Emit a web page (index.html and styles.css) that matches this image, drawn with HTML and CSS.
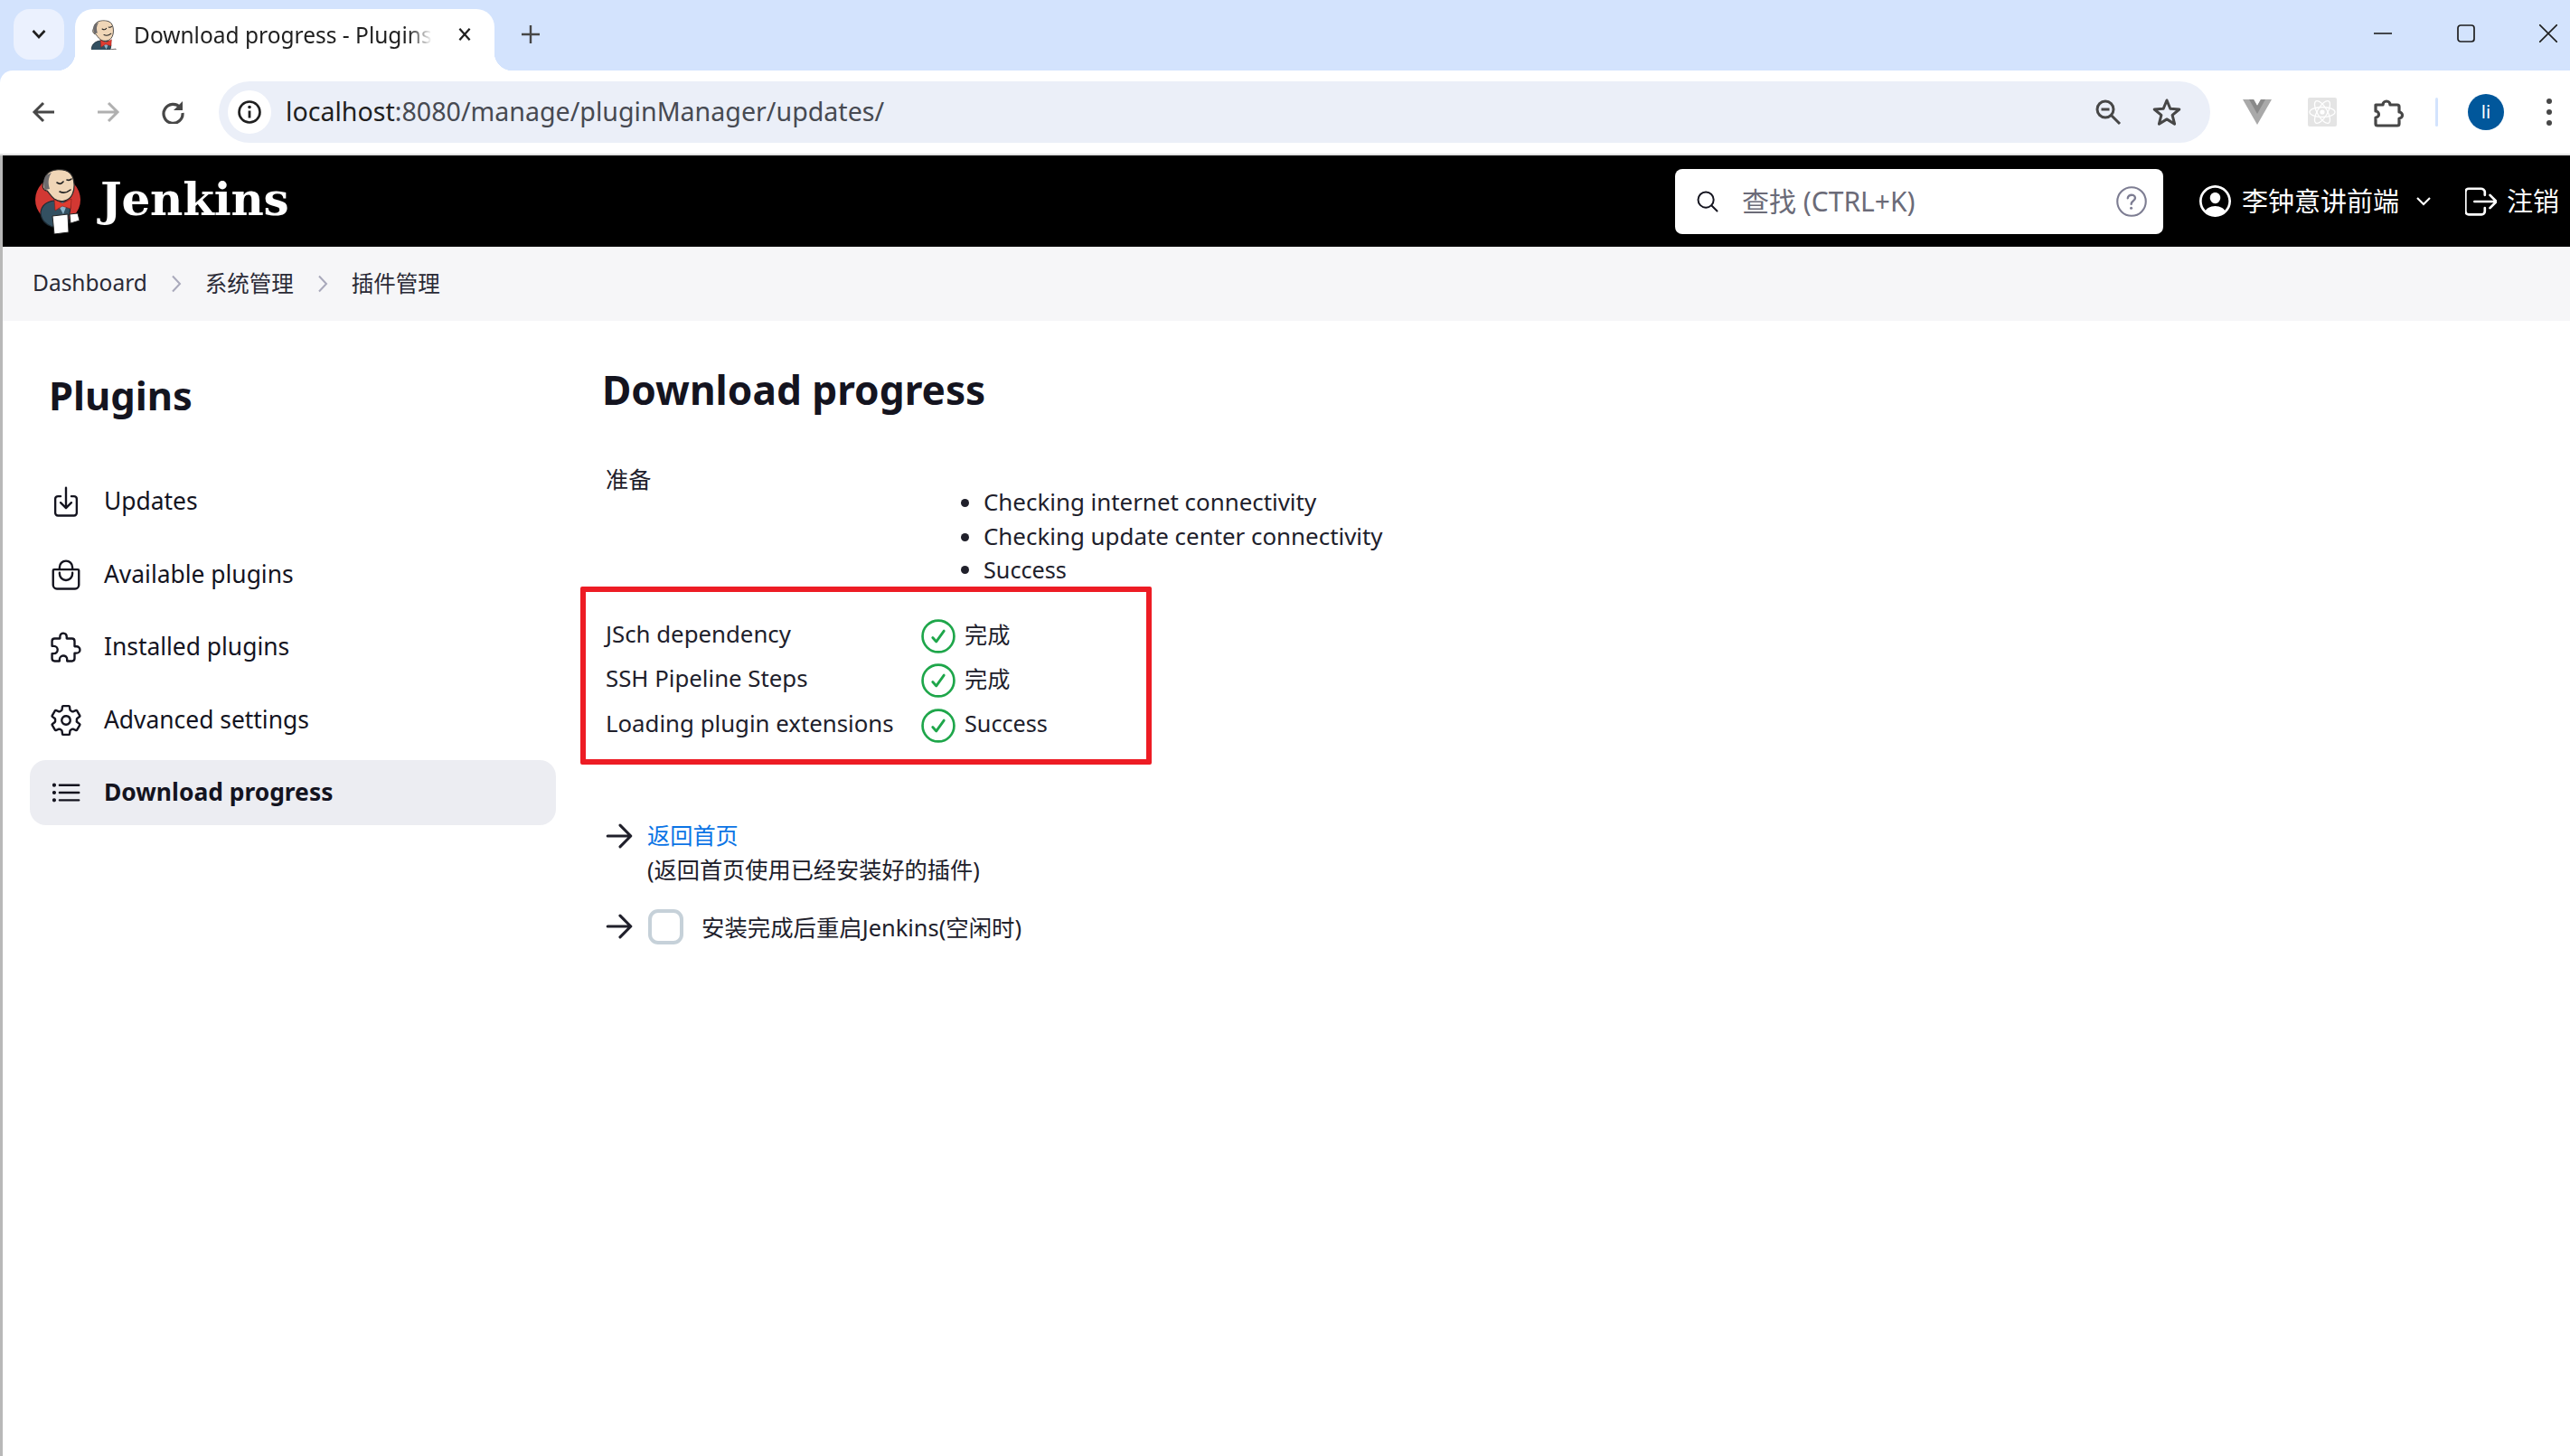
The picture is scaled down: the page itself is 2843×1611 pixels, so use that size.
FILE: index.html
```html
<!DOCTYPE html>
<html lang="zh">
<head>
<meta charset="utf-8">
<title>Download progress - Plugins</title>
<link rel="stylesheet" href="styles.css">
</head>
<body>
<svg class="defs" width="0" height="0" aria-hidden="true">
  <symbol id="butler" viewBox="0 0 52 72">
    <path d="M7 48 C8 40 14 36 22 35 L38 36 C41 40 40 46 38 52 L38 60 L20 64 C13 62 7 56 7 48Z" fill="#335061" stroke="#1d2a33" stroke-width="1.200"/>
    <path d="M25 37 L32 50 L37 37Z" fill="#8db3c9"/>
    <path d="M22 33 L31 38 L41 33 L40 44 L31 41 L23 46Z" fill="#e03c31" stroke="#7d1d18" stroke-width=".6"/>
    <path d="M13 7 C18 -1 34 -1 40 5 C45 11 45 22 42 28 C39 35 29 38 22 33 C18 30 16 26 14 24 C10 24 8 19 10 15 C11 12 11 10 13 7Z" fill="#f0d6b7" stroke="#2a2a2a" stroke-width="1.200"/>
    <path d="M13 7 C10 11 9 18 12 23 L17 22 C15 16 15 10 19 4Z" fill="#6d6b6d"/>
    <path d="M25 15 q4 3 7 -1 M36 12 q3 1 5 -1 M28 25 q6 3 12 -2" fill="none" stroke="#222" stroke-width="1.600" stroke-linecap="round"/>
    <path d="M20 52 L37 50 L38 70 L22 72Z" fill="#fff" stroke="#222" stroke-width="1"/>
    <path d="M39 50 L48 49 L50 57 L40 60Z" fill="#fff" stroke="#222" stroke-width="1"/>
  </symbol>
  <symbol id="mascot" viewBox="0 0 52 72">
    <circle cx="26" cy="34" r="25" fill="#d33833"/>
    <use href="#butler" width="52" height="72"/>
  </symbol>
  <symbol id="favi" viewBox="5 0 46 50">
    <use href="#butler" width="52" height="72"/>
  </symbol>
  <symbol id="check" viewBox="0 0 512 512">
    <circle cx="256" cy="256" r="235" fill="none" stroke="currentColor" stroke-width="36"/>
    <path d="M340 176L226 336 172 276" fill="none" stroke="currentColor" stroke-width="38" stroke-linecap="round" stroke-linejoin="round"/>
  </symbol>
  <symbol id="arrow" viewBox="0 0 512 512">
    <path d="M268 112l144 144-144 144M392 256H100" fill="none" stroke="currentColor" stroke-width="38" stroke-linecap="round" stroke-linejoin="round"/>
  </symbol>
</svg>

<div class="window">
  <div class="tabstrip">
    <div class="tabsearch">
      <svg class="ico-16" viewBox="0 0 16 16"><path d="M1.500 4l6.500 7 6.500-7" fill="none" stroke="#1f1f1f" stroke-width="2.600"/></svg>
    </div>
    <div class="tab">
      <svg class="favicon"><use href="#favi"/></svg>
      <span class="tab-title">Download progress - Plugins</span>
      <svg class="tab-close" viewBox="0 0 16 16"><path d="M3 2.500l10 11M13 2.500l-10 11" fill="none" stroke="#1f1f1f" stroke-width="2"/></svg>
    </div>
    <svg class="newtab" viewBox="0 0 20 20"><path d="M10 0v20M0 10h20" stroke="#474747" stroke-width="2.400"/></svg>
    <div class="winctl">
      <svg class="ctl" viewBox="0 0 20 20"><path d="M0 10h20" stroke="#1f1f1f" stroke-width="1.600"/></svg>
      <svg class="ctl" viewBox="0 0 20 20"><rect x="1" y="1" width="18" height="18" rx="3" fill="none" stroke="#1f1f1f" stroke-width="1.700"/></svg>
      <svg class="ctl" viewBox="0 0 20 20"><path d="M0 0l20 20M20 0L0 20" stroke="#1f1f1f" stroke-width="1.600"/></svg>
    </div>
  </div>

  <div class="toolbar">
    <svg class="nav" viewBox="0 0 26 26"><path d="M25 13H4M13 3L3 13l10 10" fill="none" stroke="#474747" stroke-width="3"/></svg>
    <svg class="nav dim" viewBox="0 0 26 26"><path d="M1 13h21M13 3l10 10-10 10" fill="none" stroke="#b0b0b0" stroke-width="3"/></svg>
    <svg class="nav" viewBox="0 0 26 26"><path d="M21.500 8A10.500 10.500 0 1 0 24 14" fill="none" stroke="#474747" stroke-width="3.200"/><path d="M24 1v10h-10z" fill="#474747"/></svg>
    <div class="omnibox">
      <div class="site-info">
        <svg class="info" viewBox="0 0 28 28"><circle cx="14" cy="14" r="11.500" fill="none" stroke="#1f1f1f" stroke-width="2.600"/><path d="M14 12.500v8" stroke="#1f1f1f" stroke-width="2.800"/><circle cx="14" cy="8.500" r="1.800" fill="#1f1f1f"/></svg>
      </div>
      <span class="url"><span class="url-host">localhost</span>:8080/manage/pluginManager/updates/</span>
      <svg class="omni-ico zoomico" viewBox="0 0 30 30"><circle cx="12" cy="12" r="9" fill="none" stroke="#474747" stroke-width="3"/><path d="M7.500 12h9M18.500 18.500L28 28" stroke="#474747" stroke-width="3"/></svg>
      <svg class="omni-ico" viewBox="0 0 32 32"><path d="M16 3l3.800 9.300 10 .7-7.700 6.400 2.500 9.800L16 23.900l-8.600 5.300 2.500-9.800L2.200 13l10-.7z" fill="none" stroke="#474747" stroke-width="3" stroke-linejoin="round"/></svg>
    </div>
    <div class="ext-row">
      <svg class="ext vue" viewBox="0 0 32 28"><path d="M0 0h12l4 7 4-7h12L16 28z" fill="#a9a9a9"/><path d="M7 0h5l4 7 4-7h5L16 16z" fill="#8a8a8a"/></svg>
      <svg class="ext react" viewBox="0 0 32 32"><rect width="32" height="32" rx="2" fill="#e4e4e4"/><g fill="none" stroke="#fff" stroke-width="1.300"><ellipse cx="16" cy="16" rx="14" ry="5.500"/><ellipse cx="16" cy="16" rx="14" ry="5.500" transform="rotate(60 16 16)"/><ellipse cx="16" cy="16" rx="14" ry="5.500" transform="rotate(120 16 16)"/></g><circle cx="16" cy="16" r="2.600" fill="#fff"/></svg>
      <svg class="ext puzzle" viewBox="0 0 34 34"><path d="M3 9h8a4 4 0 0 1 8 0h8a2 2 0 0 1 2 2v6a3.500 3.500 0 0 1 0 7v6a2 2 0 0 1-2 2H5a2 2 0 0 1-2-2v-7a3.500 3.500 0 0 0 0-7z" fill="none" stroke="#474747" stroke-width="3.200" stroke-linejoin="round"/></svg>
      <span class="sep"></span>
      <span class="avatar">li</span>
      <span class="dots"><i></i><i></i><i></i></span>
    </div>
  </div>

  <div class="page">
    <header class="jk-header">
      <svg class="logo"><use href="#mascot"/></svg>
      <span class="brand">Jenkins</span>
      <div class="search">
        <svg class="search-ico" viewBox="0 0 512 512"><path d="M221.090 64a157.090 157.090 0 10157.090 157.090A157.100 157.100 0 00221.090 64z" fill="none" stroke="#14141f" stroke-width="36"/><path d="M338.290 338.290L448 448" stroke="#14141f" stroke-width="36" stroke-linecap="round"/></svg>
        <span class="search-text">查找 (CTRL+K)</span>
        <svg class="help" viewBox="0 0 512 512"><path d="M256 32a224 224 0 1 0 0 448 224 224 0 0 0 0-448z" fill="none" stroke="#7d7d92" stroke-width="30"/><path d="M196 202s1-22 22-38c13-9 26-12 38-12 11 0 21 2 27 5 10 5 30 17 30 43 0 27-17 39-37 52s-25 27-25 44" fill="none" stroke="#7d7d92" stroke-width="34" stroke-linecap="round"/><circle cx="250" cy="358" r="22" fill="#7d7d92"/></svg>
      </div>
      <svg class="user-ico" viewBox="48 48 416 416"><path fill="#fff" d="M258.900 48C141.920 46.420 46.420 141.920 48 258.900c1.560 112.190 92.930 203.560 205.120 205.120 116.980 1.600 212.480-93.900 210.880-210.880C462.440 140.930 371.070 49.560 258.900 48zm126.420 327.250a4 4 0 01-6.140-.32 124.270 124.270 0 00-32.350-29.590C321.370 329 289.110 320 256 320s-65.370 9-90.830 25.340a124.240 124.240 0 00-32.350 29.580 4 4 0 01-6.140.32A175.320 175.320 0 0180 259c-1.630-97.310 78.220-178.760 175.570-179S432 158.810 432 256a175.320 175.320 0 01-46.680 119.250z"/><path fill="#fff" d="M256 144c-19.720 0-37.550 7.390-50.220 20.820s-19 32-17.570 51.930C191.110 256 221.520 288 256 288s64.830-32 67.790-71.250c1.480-19.740-4.800-38.140-17.680-51.820C293.390 151.440 275.590 144 256 144z"/></svg>
      <span class="user-name">李钟意讲前端</span>
      <svg class="user-chev" viewBox="0 0 18 12"><path d="M2 2l7 7 7-7" fill="none" stroke="#fff" stroke-width="2.200"/></svg>
      <svg class="logout-ico" viewBox="60 90 392 332"><path d="M304 336v40a40 40 0 01-40 40H104a40 40 0 01-40-40V136a40 40 0 0140-40h152c22.090 0 48 17.910 48 40v40M368 336l80-80-80-80M176 256h256" fill="none" stroke="#fff" stroke-width="30" stroke-linecap="round" stroke-linejoin="round"/></svg>
      <span class="logout">注销</span>
    </header>

    <nav class="crumbs">
      <span class="crumb">Dashboard</span>
      <svg class="crumb-sep" viewBox="0 0 12 20"><path d="M2 1.500l8 8.500-8 8.500" fill="none" stroke="#a9a9bb" stroke-width="2"/></svg>
      <span class="crumb">系统管理</span>
      <svg class="crumb-sep" viewBox="0 0 12 20"><path d="M2 1.500l8 8.500-8 8.500" fill="none" stroke="#a9a9bb" stroke-width="2"/></svg>
      <span class="crumb">插件管理</span>
    </nav>

    <div class="body-row">
      <aside class="sidebar">
        <h2 class="side-title">Plugins</h2>
        <ul class="side-list">
          <li class="side-item">
            <svg class="side-ico" viewBox="0 0 512 512"><path d="M336 176h40a40 40 0 0140 40v208a40 40 0 01-40 40H136a40 40 0 01-40-40V216a40 40 0 0140-40h40M176 272l80 80 80-80M256 48v288" /></svg>
            <span class="side-text">Updates</span>
          </li>
          <li class="side-item">
            <svg class="side-ico" viewBox="0 0 512 512"><path d="M80 176a16 16 0 00-16 16v216c0 30.240 25.760 56 56 56h272c30.240 0 56-24.510 56-54.750V192a16 16 0 00-16-16zM160 176v-32a96 96 0 0196-96h0a96 96 0 0196 96v32M160 224v16a96 96 0 0096 96h0a96 96 0 0096-96v-16"/></svg>
            <span class="side-text">Available plugins</span>
          </li>
          <li class="side-item">
            <svg class="side-ico" viewBox="0 0 512 512"><path d="M413.660 246.100H386a2 2 0 01-2-2v-77.240A38.860 38.860 0 00345.140 128H267.900a2 2 0 01-2-2V98.340c0-27.140-21.500-49.860-48.640-50.330a49.530 49.530 0 00-50.400 49.510V126a2 2 0 01-2 2H87.620A39.740 39.740 0 0048 167.620V238a2 2 0 002 2h26.910c29.370 0 53.680 25.480 54.090 54.850.42 29.870-23.510 57.150-53.290 57.150H50a2 2 0 00-2 2v70.380A39.740 39.740 0 0087.620 464H158a2 2 0 002-2v-20.930c0-30.280 24.750-56.350 55-57.060 30.100-.70 57 20.310 57 50.280V462a2 2 0 002 2h71.140A38.860 38.860 0 00384 425.140v-78a2 2 0 012-2h28.480c27.630 0 49.520-22.670 49.520-50.400s-23.200-48.640-50.340-48.640z"/></svg>
            <span class="side-text">Installed plugins</span>
          </li>
          <li class="side-item">
            <svg class="side-ico" viewBox="0 0 512 512"><path d="M262.290 192.310a64 64 0 1057.400 57.400 64.130 64.130 0 00-57.400-57.400zM416.390 256a154.340 154.340 0 01-1.530 20.790l45.210 35.460a10.810 10.810 0 012.450 13.750l-42.770 74a10.810 10.810 0 01-13.140 4.590l-44.900-18.080a16.110 16.110 0 00-15.170 1.750A164.480 164.480 0 01325 400.800a15.940 15.940 0 00-8.820 12.140l-6.730 47.890a11.080 11.080 0 01-10.680 9.170h-85.540a11.110 11.110 0 01-10.690-8.870l-6.720-47.820a16.070 16.070 0 00-9-12.220 155.300 155.300 0 01-21.460-12.570 16 16 0 00-15.110-1.710l-44.890 18.070a10.810 10.810 0 01-13.140-4.580l-42.770-74a10.800 10.800 0 012.450-13.750l38.210-30a16.050 16.050 0 006-14.080c-.36-4.170-.58-8.330-.58-12.500s.21-8.270.58-12.350a16 16 0 00-6.070-13.940l-38.190-30A10.810 10.810 0 0149.480 186l42.770-74a10.810 10.810 0 0113.140-4.590l44.900 18.080a16.110 16.110 0 0015.170-1.750A164.480 164.480 0 01187 111.200a15.940 15.940 0 008.820-12.140l6.730-47.890A11.080 11.080 0 01213.230 42h85.540a11.110 11.110 0 0110.690 8.870l6.720 47.820a16.070 16.070 0 009 12.220 155.300 155.300 0 0121.460 12.570 16 16 0 0015.110 1.710l44.890-18.070a10.810 10.810 0 0113.140 4.580l42.770 74a10.800 10.800 0 01-2.450 13.750l-38.210 30a16.050 16.050 0 00-6.050 14.080c.33 4.140.55 8.300.55 12.470z"/></svg>
            <span class="side-text">Advanced settings</span>
          </li>
          <li class="side-item active">
            <svg class="side-ico" viewBox="0 0 512 512"><path d="M160 144h288M160 256h288M160 368h288"/><circle class="dot" cx="80" cy="144" r="20"/><circle class="dot" cx="80" cy="256" r="20"/><circle class="dot" cx="80" cy="368" r="20"/></svg>
            <span class="side-text">Download progress</span>
          </li>
        </ul>
      </aside>

      <main class="main">
        <h1 class="main-title">Download progress</h1>
        <div class="prep-label">准备</div>
        <ul class="prep-list">
          <li>Checking internet connectivity</li>
          <li>Checking update center connectivity</li>
          <li class="plain">Success</li>
        </ul>

        <div class="redbox">
          <div class="job">
            <span class="job-name">JSch dependency</span>
            <svg class="ok"><use href="#check"/></svg>
            <span>完成</span>
          </div>
          <div class="job">
            <span class="job-name">SSH Pipeline Steps</span>
            <svg class="ok"><use href="#check"/></svg>
            <span>完成</span>
          </div>
          <div class="job">
            <span class="job-name">Loading plugin extensions</span>
            <svg class="ok"><use href="#check"/></svg>
            <span>Success</span>
          </div>
        </div>

        <div class="next-row first">
          <svg class="next-arrow"><use href="#arrow"/></svg>
          <div class="next-text">
            <a class="home-link" href="#">返回首页</a>
            <div>(返回首页使用已经安装好的插件)</div>
          </div>
        </div>
        <div class="next-row second">
          <svg class="next-arrow"><use href="#arrow"/></svg>
          <span class="checkbox"></span>
          <span class="check-label">安装完成后重启Jenkins(空闲时)</span>
        </div>
      </main>
    </div>
  </div>
</div>
</body>
</html>
```

FILE: styles.css
```css
* { box-sizing: border-box; }
html, body { margin: 0; padding: 0; height: 100%; overflow: hidden; }
body {
  font-family: "Noto Sans", "Noto Sans CJK SC", sans-serif;
  color: #14141f;
  background: #d3e3fd;
}
.defs { display: block; height: 0; }

.window { display: flex; flex-direction: column; height: 1611px; }

/* browser chrome */
.tabstrip {
  height: 78px;
  flex: none;
  background: #d3e3fd;
  display: flex;
  align-items: flex-start;
  padding: 10px 0 0 15px;
}
.tabsearch {
  width: 56px;
  height: 56px;
  border-radius: 18px;
  background: #ebf1fe;
  display: flex;
  align-items: center;
  justify-content: center;
  margin-right: 12px;
}
.ico-16 { width: 16px; height: 16px; }
.tab {
  position: relative;
  width: 464px;
  height: 68px;
  background: #fff;
  border-radius: 20px 20px 0 0;
  display: flex;
  align-items: flex-start;
  padding: 12px 0 0 17px;
}
.tab::before, .tab::after {
  content: "";
  position: absolute;
  bottom: 0;
  width: 20px;
  height: 20px;
}
.tab::before { left: -20px; background: radial-gradient(circle at 0 0, transparent 20px, #fff 20.5px); }
.tab::after { right: -20px; background: radial-gradient(circle at 100% 0, transparent 20px, #fff 20.5px); }
.favicon { width: 30px; height: 33px; flex: none; }
.tab-title {
  width: 330px;
  margin-left: 18px;
  font-size: 24.5px;
  line-height: 33px;
  color: #1f1f1f;
  white-space: nowrap;
  overflow: hidden;
  -webkit-mask-image: linear-gradient(90deg, #000 92%, transparent);
  mask-image: linear-gradient(90deg, #000 92%, transparent);
}
.tab-close { width: 18px; height: 18px; margin: 7px 0 0 27px; flex: none; }
.newtab { width: 20px; height: 20px; margin: 18px 0 0 30px; flex: none; }
.winctl { margin-left: auto; display: flex; gap: 71.5px; padding: 17px 14px 0 0; }
.ctl { width: 20px; height: 20px; flex: none; }

.toolbar {
  height: 94px;
  flex: none;
  background: #fff;
  border-bottom: 2px solid #e2e2e2;
  border-top-left-radius: 14px;
  display: flex;
  align-items: center;
  padding-left: 35px;
}
.nav { width: 26px; height: 26px; flex: none; margin-right: 45.5px; }
.nav:nth-of-type(3) { margin-right: 0; }
.omnibox {
  width: 2203px;
  height: 68px;
  margin-left: 38px;
  background: #ebeff8;
  border-radius: 34px;
  display: flex;
  align-items: center;
  padding: 0 32px 0 10px;
  flex: none;
}
.site-info {
  width: 48px;
  height: 48px;
  border-radius: 50%;
  background: #fff;
  display: flex;
  align-items: center;
  justify-content: center;
  flex: none;
}
.info { width: 28px; height: 28px; }
.url { margin-left: 16px; padding-bottom: 3px; font-size: 28.6px; color: #474a52; white-space: nowrap; }
.url-host { color: #1f1f1f; }
.zoomico { margin-left: auto; }
.omni-ico { width: 30px; height: 30px; flex: none; }
.omni-ico + .omni-ico { margin-left: 34px; width: 32px; height: 32px; }
.ext-row { display: flex; align-items: center; padding-left: 36px; }
.ext { flex: none; }
.vue { width: 32px; height: 28px; }
.react { width: 32px; height: 32px; margin-left: 40px; }
.puzzle { width: 34px; height: 34px; margin-left: 40px; }
.sep { width: 3px; height: 32px; border-radius: 2px; background: #d3e3fd; margin-left: 35px; }
.avatar {
  width: 40px;
  height: 40px;
  border-radius: 50%;
  background: #01579b;
  color: #fff;
  font-size: 20px;
  line-height: 40px;
  text-align: center;
  margin-left: 33px;
}
.dots { display: flex; flex-direction: column; gap: 6px; margin-left: 47px; }
.dots i { display: block; width: 6px; height: 6px; border-radius: 50%; background: #474747; }

/* page */
.page {
  flex: 1;
  display: flex;
  flex-direction: column;
  background: #fff;
  border-left: 3px solid #b8b8b8;
  min-height: 0;
}
.jk-header {
  height: 101px;
  flex: none;
  background: #000;
  color: #fff;
  display: flex;
  align-items: center;
  padding: 0 12px 0 35px;
}
.logo { width: 52px; height: 72px; flex: none; }
.brand {
  margin-left: 21px;
  padding-bottom: 3px;
  font-family: "DejaVu Serif", serif;
  font-weight: 700;
  font-size: 50px;
  line-height: 72px;
  letter-spacing: -.2px;
  color: #fff;
}
.search {
  margin-left: auto;
  width: 540px;
  height: 72px;
  background: #fff;
  border-radius: 8px;
  display: flex;
  align-items: center;
  padding: 0 17px 0 22px;
  flex: none;
}
.search-ico { width: 28px; height: 28px; flex: none; }
.search-text { margin-left: 24px; padding-bottom: 3px; font-size: 30px; color: #6b6b78; }
.help { width: 36px; height: 36px; margin-left: auto; flex: none; }
.user-ico { width: 35px; height: 35px; margin-left: 40px; flex: none; }
.user-name { margin-left: 12px; padding-bottom: 3px; font-size: 29px; white-space: nowrap; }
.user-chev { width: 18px; height: 12px; margin-left: 18px; flex: none; }
.logout-ico { width: 35px; height: 32px; margin-left: 37px; flex: none; }
.logout { margin-left: 11px; padding-bottom: 3px; font-size: 29px; white-space: nowrap; }

.crumbs {
  height: 82px;
  flex: none;
  background: #f6f6f8;
  display: flex;
  align-items: center;
  padding: 0 0 3px 33px;
}
.crumb { font-size: 24.5px; color: #2a2a36; white-space: nowrap; }
.crumb-sep { width: 12px; height: 20px; margin: 3px 26px 0; flex: none; }

.body-row { flex: 1; display: flex; min-height: 0; }

.sidebar { width: 663px; flex: none; padding: 0 48px 0 30px; }
.side-title {
  margin: 55px 0 0 21px;
  font-size: 43.5px;
  line-height: 54px;
  font-weight: 700;
}
.side-list { list-style: none; margin: 55px 0 0; padding: 0; width: 582px; }
.side-item {
  height: 72px;
  margin-bottom: 8.5px;
  border-radius: 18px;
  display: flex;
  align-items: center;
  padding-left: 21px;
  font-size: 26.4px;
}
.side-text { padding-bottom: 2px; }
.side-item.active { background: #ecedf2; font-weight: 700; }
.side-ico {
  width: 38px;
  height: 38px;
  flex: none;
  margin-right: 23px;
  fill: none;
  stroke: #14141f;
  stroke-width: 32;
  stroke-linecap: round;
  stroke-linejoin: round;
}
.side-ico .dot { fill: #14141f; stroke: #14141f; stroke-width: 16; }

.main { flex: 1; min-width: 0; font-size: 25.2px; color: #20202b; }
.main-title {
  margin: 51px 0 0;
  font-size: 44.2px;
  line-height: 50px;
  font-weight: 700;
  color: #14141f;
}
.prep-label { margin: 55px 0 0 4px; line-height: 38px; }
.prep-list {
  list-style: disc;
  margin: -12px 0 0;
  padding: 0 0 0 422px;
  line-height: 37.5px;
  font-size: 25.9px;
}
.prep-list .plain { font-size: 25.2px; }
.redbox {
  width: 632px;
  height: 197px;
  margin: -1px 0 0 -24px;
  border: 6px solid #ed1c24;
  border-radius: 2px;
  padding: 21.5px 0 0 22px;
}
.job {
  height: 49.5px;
  display: flex;
  align-items: center;
}
.job-name { width: 349px; flex: none; white-space: nowrap; font-size: 25.8px; }
.ok { width: 38px; height: 38px; color: #1ea64a; flex: none; margin-right: 10px; margin-top: 6px; }

.next-row { display: flex; margin-left: -2px; }
.next-row.first { margin-top: 59px; align-items: flex-start; }
.next-row.second { margin-top: 25px; align-items: center; height: 39px; }
.next-arrow { width: 42px; height: 42px; flex: none; color: #20202b; margin-right: 10px; }
.first .next-arrow { margin-top: -1px; }
.next-text { line-height: 38px; }
.home-link { color: #0b74e5; text-decoration: none; }
.checkbox {
  width: 39px;
  height: 39px;
  margin-left: 1px;
  border: 4px solid #c6d1d9;
  border-radius: 11px;
  background: #fff;
  flex: none;
}
.check-label { margin-left: 20px; white-space: nowrap; font-size: 25.4px; }
```
